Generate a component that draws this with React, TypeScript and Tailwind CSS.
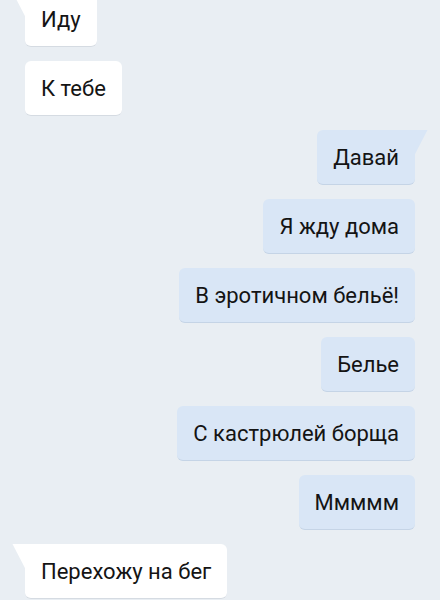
import React from 'react';

type Msg = { text: string; out: boolean; tail?: boolean };

const messages: Msg[] = [
    { text: 'Иду', out: false, tail: true },
    { text: 'К тебе', out: false },
    { text: 'Давай', out: true, tail: true },
    { text: 'Я жду дома', out: true },
    { text: 'В эротичном бельё!', out: true },
    { text: 'Белье', out: true },
    { text: 'С кастрюлей борща', out: true },
    { text: 'Ммммм', out: true },
    { text: 'Перехожу на бег', out: false, tail: true },
];

const Bubble = ({ msg }: { msg: Msg }) => {
    const base = msg.out
        ? 'bg-[#d9e6f6] border-[#c5d4e6]'
        : 'bg-white border-[#d5dbe2]';
    const corner = msg.tail ? (msg.out ? 'rounded-tr-none' : 'rounded-tl-none') : '';
    return (
        <div className={`relative h-[55px] flex items-center px-4 rounded-[6px] border-b ${base} ${corner}`}>
            {/* Tail */}
            {msg.tail && (
                <svg
                    className={`absolute top-0 ${msg.out ? 'right-[-13px]' : 'left-[-13px]'}`}
                    width="14"
                    height="26"
                    viewBox="0 0 14 26"
                >
                    {msg.out ? (
                        <path d="M0 0 H13.5 L0 26 Z" fill="#d9e6f6" />
                    ) : (
                        <path d="M14 0 H0.5 L14 26 Z" fill="#ffffff" />
                    )}
                </svg>
            )}
            <span className="text-[22px] text-[#141414] whitespace-nowrap">{msg.text}</span>
        </div>
    );
};

const App = () => {
    return (
        <div
            className="w-[440px] h-[600px] overflow-hidden bg-[#e9eef3]"
            style={{ fontFamily: 'Roboto, "Noto Sans", sans-serif' }}
        >
            <div className="flex flex-col gap-[14px] px-[25px] mt-[-8px]">
                {messages.map((m, i) => (
                    <div key={i} className={`flex ${m.out ? 'justify-end' : 'justify-start'}`}>
                        <Bubble msg={m} />
                    </div>
                ))}
            </div>
        </div>
    );
};

export default App;
